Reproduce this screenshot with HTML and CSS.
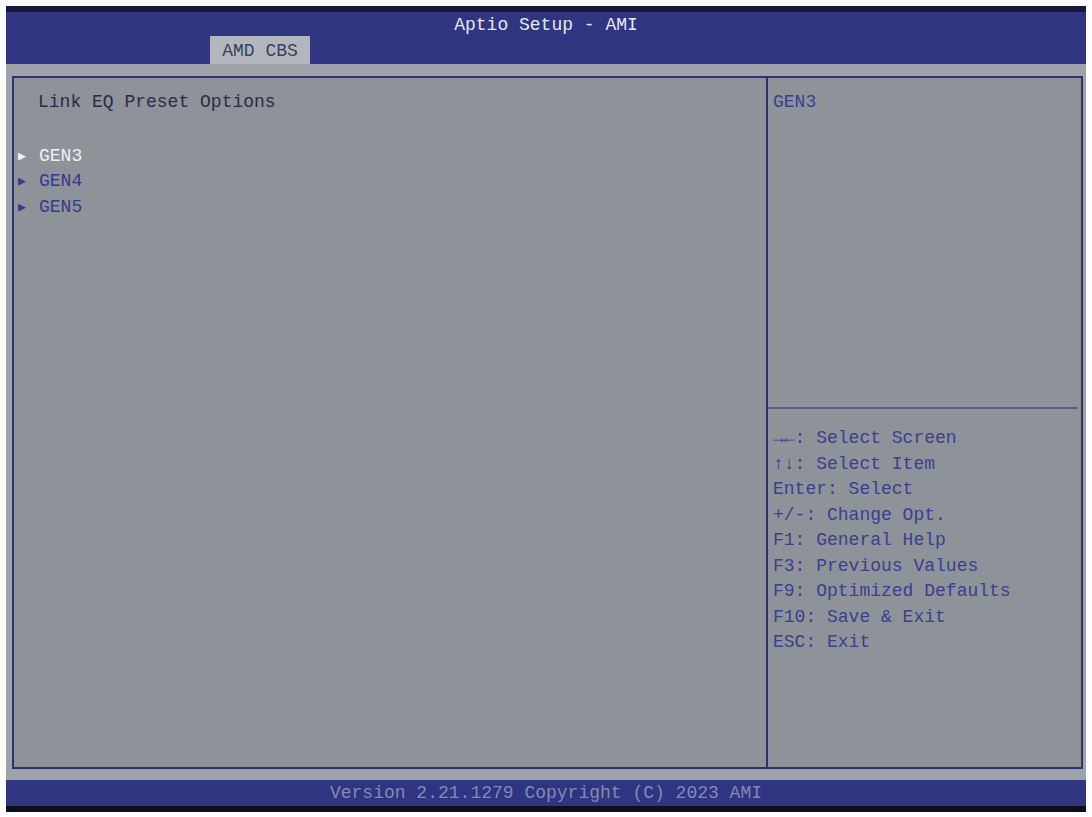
FILE: index.html
```html
<!DOCTYPE html>
<html lang="en">
<head>
  <meta charset="utf-8">
  <title>Aptio Setup - AMI</title>
  <link rel="stylesheet" href="styles.css">
</head>
<body>
  <div class="screen">
    <div class="header">
      <div class="title">Aptio Setup - AMI</div>
      <div class="tabs">
        <div class="tab">AMD CBS</div>
      </div>
    </div>

    <div class="strip">
      <div class="frame">
        <div class="main">
          <div class="line">Link EQ Preset Options</div>
          <div class="line blank"></div>
          <div class="item selected"><span class="arrow">&#9654;</span>GEN3</div>
          <div class="item"><span class="arrow">&#9654;</span>GEN4</div>
          <div class="item"><span class="arrow">&#9654;</span>GEN5</div>
        </div>
        <div class="side">
          <div class="help-top">
            <div class="line">GEN3</div>
          </div>
          <div class="keys">
            <div class="line">&rarr;&larr;: Select Screen</div>
            <div class="line">&uarr;&darr;: Select Item</div>
            <div class="line">Enter: Select</div>
            <div class="line">+/-: Change Opt.</div>
            <div class="line">F1: General Help</div>
            <div class="line">F3: Previous Values</div>
            <div class="line">F9: Optimized Defaults</div>
            <div class="line">F10: Save &amp; Exit</div>
            <div class="line">ESC: Exit</div>
          </div>
        </div>
      </div>
    </div>

    <div class="footer">Version 2.21.1279 Copyright (C) 2023 AMI</div>
  </div>
</body>
</html>
```

FILE: styles.css
```css
* {
  box-sizing: border-box;
  margin: 0;
  padding: 0;
}
body {
  background: #fdfdfd;
  font-family: 'Liberation Mono', 'DejaVu Sans Mono', monospace;
  font-size: 18px;
  height: 817px;
  overflow: hidden;
}
.screen {
  margin: 6px 6px 0 6px;
  width: 1080px;
  height: 806px;
  display: flex;
  flex-direction: column;
  background: #9ea2a9;
  border-bottom: 6px solid #0e0e1a;
}
.header {
  height: 58px;
  background: #2f3580;
  border-top: 6px solid #17183a;
  display: flex;
  flex-direction: column;
  justify-content: space-between;
}
.title {
  text-align: center;
  color: #e6e8f2;
  line-height: 20px;
  padding-top: 3px;
}
.tabs {
  display: flex;
  padding-left: 204px;
}
.tab {
  width: 100px;
  height: 28px;
  background: #b3b7bd;
  color: #3a3f63;
  text-align: center;
  line-height: 30px;
}
.strip {
  flex: 1;
  padding: 12px 3px 11px 6px;
  display: flex;
}
.frame {
  flex: 1;
  display: flex;
  border: 2px solid #2e3170;
  background: #8e9299;
}
.line {
  line-height: 25.5px;
  height: 25.5px;
  white-space: pre;
}
.blank {
  height: 28px;
}
.main {
  width: 754px;
  border-right: 2px solid #2e3170;
  padding: 12px 0 0 24px;
  color: #2a2d48;
}
.item {
  line-height: 25.5px;
  height: 25.5px;
  margin-left: -21px;
  color: #333b8c;
  display: flex;
}
.item.selected {
  color: #eef0f6;
}
.arrow {
  width: 22px;
  font-size: 13px;
  padding-left: 1px;
}
.side {
  flex: 1;
  display: flex;
  flex-direction: column;
  color: #3a3f90;
}
.help-top {
  height: 331px;
  padding: 12px 0 0 5px;
  border-bottom: 2px solid #5a5e80;
  margin-right: 4px;
}
.keys {
  padding: 17px 0 0 5px;
}
.footer {
  height: 26px;
  background: #2f3580;
  color: #8589b6;
  text-align: center;
  line-height: 27px;
}
```
